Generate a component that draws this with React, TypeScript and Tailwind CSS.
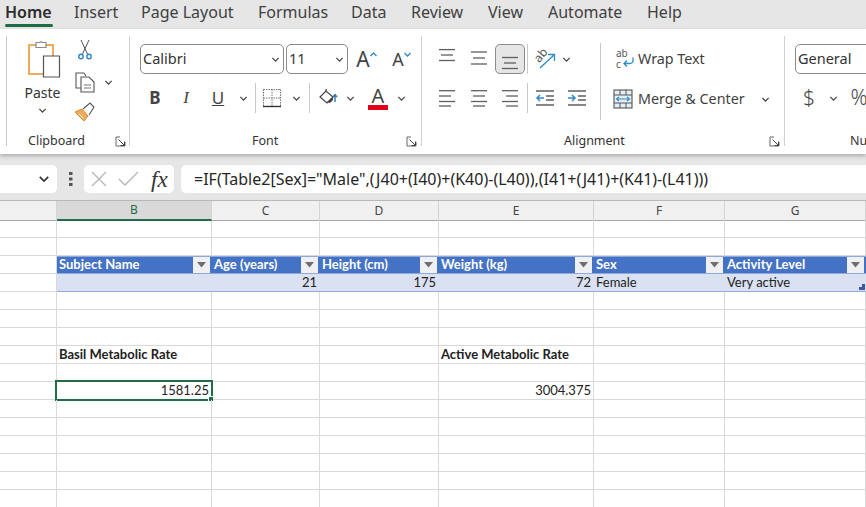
import React from "react";

const G = "#5f5f5f";
const Chev = ({ s = 9, c = "#444" }: { s?: number; c?: string }) => (
  <svg className="shrink-0" width={s} height={s} viewBox="0 0 10 10"><path d="M1.5 3.2 5 6.8 8.5 3.2" fill="none" stroke={c} strokeWidth="1.4" /></svg>
);
const Launcher = () => (
  <svg width="11" height="11" viewBox="0 0 11 11"><path d="M5 1H1v9h9V6" fill="none" stroke="#666" strokeWidth="1" /><path d="M3.5 3.5 9.5 9.5M9.5 5.5v4h-4" fill="none" stroke="#444" strokeWidth="1" /></svg>
);
const Lines = ({ rows }: { rows: [number, number, number][] }) => (
  <svg width="20" height="20" viewBox="0 0 20 20" className="overflow-visible">
    {rows.map(([x1, x2, y], i) => <line key={i} x1={x1} x2={x2} y1={y} y2={y} stroke={G} strokeWidth="1.3" />)}
  </svg>
);
const Sep = ({ h = "h-[30px]" }: { h?: string }) => <div className={`w-px bg-[#c8c8c8] ${h} shrink-0`} />;

const Paste = () => (
  <svg width="36" height="40" viewBox="0 0 36 40">
    <path d="M3 6h24v29H3z" fill="#fff" stroke="#eeab5c" strokeWidth="2" />
    <path d="M10 3.5h3.5a2 2 0 0 1 3 0H20v5H10z" fill="#fff" stroke="#8a8a8a" strokeWidth="1.2" />
    <path d="M17.5 17h16v21h-16z" fill="#fff" stroke="#555" strokeWidth="1.2" />
  </svg>
);
const Scissors = () => (
  <svg width="16" height="22" viewBox="0 0 16 22">
    <path d="M4 1l6.5 14M12 1 5.5 15" fill="none" stroke="#555" strokeWidth="1" />
    <circle cx="4" cy="17.5" r="2.2" fill="none" stroke="#2e86c8" strokeWidth="1.4" />
    <circle cx="12" cy="17.5" r="2.2" fill="none" stroke="#2e86c8" strokeWidth="1.4" />
  </svg>
);
const Copy = () => (
  <svg width="22" height="22" viewBox="0 0 22 22">
    <path d="M7 17H2V2h8l2 3" fill="none" stroke="#555" strokeWidth="1.1" />
    <path d="M7 6h8l5 5v10H7z" fill="#fff" stroke="#555" strokeWidth="1.1" />
    <path d="M10 14h7M10 17h7" stroke="#777" strokeWidth="1" />
  </svg>
);
const Brush = () => (
  <svg width="22" height="20" viewBox="0 0 22 20">
    <path d="M1 10l7-3 6 7-4 5z" fill="#eeab5c" stroke="#d98a2b" strokeWidth="1" />
    <path d="M9 7l7-6 4 4-5 8" fill="#fff" stroke="#555" strokeWidth="1.1" />
    <path d="M5 12l4 4" stroke="#fff" strokeWidth="1" />
  </svg>
);
const Borders = () => (
  <svg width="20" height="20" viewBox="0 0 20 20">
    <path d="M1.5 1.5h17M1.5 10h17M1.5 1.5v17M10 1.5v17M18.5 1.5v17" stroke="#777" strokeWidth="1" strokeDasharray="1.5 1" fill="none" />
    <path d="M1 18.5h18" stroke="#333" strokeWidth="1.4" />
  </svg>
);
const Fill = () => (
  <svg width="20" height="20" viewBox="0 0 20 20">
    <path d="M2 9l6-6 7 6-6 6z" fill="#fff" stroke="#444" strokeWidth="1.2" />
    <path d="M8 3V1" stroke="#444" strokeWidth="1.2" />
    <path d="M9 14l6-5v3l-3 3z" fill="#444" />
    <path d="M17 14V7M15 9l2-2.5L19 9" fill="none" stroke="#2e75b6" strokeWidth="1.4" />
  </svg>
);
const Orient = () => (
  <svg width="24" height="24" viewBox="0 0 24 24" className="overflow-visible">
    <text x="1" y="13" fontSize="12" fill="#555" fontFamily="Noto Sans" transform="rotate(-50 7 9)">ab</text>
    <path d="M7 21 21 8M15 7.5h6.5V14" fill="none" stroke="#2e8bcb" strokeWidth="1.3" />
  </svg>
);
const Indent = ({ dir }: { dir: "l" | "r" }) => (
  <svg width="20" height="20" viewBox="0 0 20 20">
    <path d="M1 3h18M11 8h8M11 12h8M1 17h18" stroke={G} strokeWidth="1.3" />
    {dir === "l"
      ? <path d="M9 10H2M5 7l-3 3 3 3" fill="none" stroke="#2e8bcb" strokeWidth="1.5" />
      : <path d="M1 10h7M5 7l3 3-3 3" fill="none" stroke="#2e8bcb" strokeWidth="1.5" />}
  </svg>
);
const Wrap = () => (
  <svg width="20" height="22" viewBox="0 0 20 22" className="overflow-visible">
    <text x="0" y="9" fontSize="10" fill="#555" fontFamily="Noto Sans">ab</text>
    <text x="0" y="20" fontSize="10" fill="#555" fontFamily="Noto Sans">c</text>
    <path d="M17 9.5v3a3 3 0 0 1-3 3H8M11 12.5l-3 3 3 3" fill="none" stroke="#2e8bcb" strokeWidth="1.3" />
  </svg>
);
const Merge = () => (
  <svg width="20" height="20" viewBox="0 0 20 20">
    <rect x="1" y="1" width="18" height="18" fill="#e3eef7" stroke="#555" strokeWidth="1.1" />
    <path d="M1 6h18M1 14h18M7 1v5M13 1v5M7 14v5M13 14v5" stroke="#555" strokeWidth="1" />
    <path d="M3.5 10h13M6 8l-2.5 2L6 12M14 8l2.5 2-2.5 2" fill="none" stroke="#2e8bcb" strokeWidth="1.1" />
  </svg>
);
const FilterBtn = () => (
  <div className="w-[17px] h-[16px] bg-[#f0f0f2] flex items-center justify-center shrink-0">
    <svg width="9" height="6" viewBox="0 0 9 6"><path d="M0 0h9L4.5 5.5z" fill="#6e6e6e" /></svg>
  </div>
);

const Box = ({ className = "", children }: { className?: string; children?: React.ReactNode }) => (
  <div className={`flex items-center justify-center shrink-0 ${className}`}>{children}</div>
);
const Combo = ({ label, className }: { label: string; className: string }) => (
  <div className={`h-[30px] border border-[#8a8a8a] rounded-[5px] flex items-center pl-[2px] pr-[3px] justify-between shrink-0 text-[14.5px] text-[#333] ${className}`}>
    <span>{label}</span><Chev />
  </div>
);

const tabs = ["Home", "Insert", "Page Layout", "Formulas", "Data", "Review", "View", "Automate", "Help"];
const tabW = ["w-[69px]", "w-[67px]", "w-[117px]", "w-[93px]", "w-[60px]", "w-[77px]", "w-[60px]", "w-[99px]", "w-[60px]"];

const colW = ["w-[57px]", "w-[155px]", "w-[108px]", "w-[119px]", "w-[155px]", "w-[131px]", "w-[141px]"];
const headers = ["Subject Name", "Age (years)", "Height (cm)", "Weight (kg)", "Sex", "Activity Level"];
const rowIdx = Array.from({ length: 16 }, (_, i) => i);

const Plain = ({ c, className = "", children }: { c: number; className?: string; children?: React.ReactNode }) => (
  <div className={`${colW[c]} shrink-0 border-r border-[#d9d9d9] pl-[2px] pr-[2px] flex items-center relative ${className}`}>{children}</div>
);

function Row({ i }: { i: number }) {
  const h = i === 0 ? "h-[17px]" : "h-[18px]";
  if (i === 2) {
    return (
      <div className="flex h-[18px]">
        <div className="w-[57px] shrink-0 border-b border-r border-[#d9d9d9]" />
        {headers.map((t, k) => (
          <div key={t} className={`${colW[k + 1]} shrink-0 bg-[#4472c4] border-y border-[#8ea9db] flex items-center justify-between pl-[2px] pr-[2px] text-white font-bold text-[13px]`}>
            <span className="-mt-[2px]">{t}</span><FilterBtn />
          </div>
        ))}
      </div>
    );
  }
  if (i === 3) {
    const vals = ["", "21", "175", "72"];
    return (
      <div className="flex h-[18px]">
        <div className="w-[57px] shrink-0 border-b border-r border-[#d9d9d9]" />
        {vals.map((v, k) => (
          <div key={k} className={`${colW[k + 1]} shrink-0 bg-[#d9e1f2] border-b border-[#8ea9db] flex items-center justify-end pr-[3px]`}>{v}</div>
        ))}
        <div className={`${colW[5]} shrink-0 bg-[#d9e1f2] border-b border-[#8ea9db] flex items-center pl-[2px]`}>Female</div>
        <div className={`${colW[6]} shrink-0 bg-[#d9e1f2] border-b border-[#8ea9db] flex items-center pl-[2px] relative`}>
          Very active
          <svg className="absolute right-px bottom-px" width="6" height="6" viewBox="0 0 6 6"><path d="M6 0v6H0V3h3V0z" fill="#3f55a5" /></svg>
        </div>
      </div>
    );
  }
  return (
    <div className={`flex ${h} border-b border-[#d9d9d9]`}>
      {colW.map((_, c) => {
        let content: React.ReactNode = null;
        let cls = "";
        if (i === 7 && c === 1) { content = "Basil Metabolic Rate"; cls = "font-bold"; }
        if (i === 7 && c === 4) { content = "Active Metabolic Rate"; cls = "font-bold"; }
        if (i === 9 && c === 1) { content = "1581.25"; cls = "justify-end"; }
        if (i === 9 && c === 4) { content = "3004.375"; cls = "justify-end"; }
        return (
          <Plain key={c} c={c} className={`whitespace-nowrap ${cls}`}>
            {content}
            {i === 9 && c === 1 && (
              <>
                <div className="absolute left-[-2px] top-[-2px] w-[158px] h-[21px] border-2 border-[#1f6e46]" />
                <div className="absolute right-[-2px] bottom-[-2px] w-[5px] h-[5px] bg-[#1f6e46] border-l border-t border-white" />
              </>
            )}
          </Plain>
        );
      })}
    </div>
  );
}

export default function App() {
  return (
    <div className="w-[866px] h-[507px] overflow-hidden bg-white text-[#1f1f1f] font-['Noto_Sans',sans-serif]">
      {/* Tabs */}
      <div className="h-[29px] bg-[#e6e6e6] flex pl-[6px] text-[#3f3f3f] text-[16px]">
        {tabs.map((t, i) => (
          <div key={t} className={`${tabW[i]} shrink-0 h-[29px] leading-[24px] ${i === 0 ? "font-semibold text-[#2b2b2b] -ml-px" : ""}`}>
            {t}
            {i === 0 && <div className="w-[48px] h-[3px] bg-[#1e6b47] rounded-sm" />}
          </div>
        ))}
      </div>

      {/* Ribbon */}
      <div className="h-[125px] bg-white flex items-stretch pl-[6px] pt-[7px] pb-[7px] shadow-[0_2px_4px_rgba(0,0,0,0.25)] relative overflow-hidden text-[#333]">
        <Sep h="h-[110px]" />
        {/* Clipboard */}
        <div className="w-[123px] shrink-0 border-r border-[#d0d0d0] h-[110px] flex flex-col">
          <div className="flex h-[100px]">
            <div className="w-[61px] ml-[5px] flex flex-col items-center pt-[3px]">
              <div className="ml-[2px]"><Paste /></div>
              <div className="text-[14px] leading-[18px] mt-[5px]">Paste</div>
              <div className="mt-[4px]"><Chev /></div>
            </div>
            <div className="flex flex-col items-start pt-[2px] gap-[9px] ml-[1px]">
              <Box className="w-[22px] h-[24px]"><Scissors /></Box>
              <div className="flex items-center gap-[8px] h-[22px]"><Box className="w-[22px]"><Copy /></Box><Chev /></div>
              <Box className="w-[22px] h-[20px]"><Brush /></Box>
            </div>
          </div>
          <div className="flex items-center h-[10px] pl-[21px] pr-[3px] justify-between text-[12.5px]"><span>Clipboard</span><Launcher /></div>
        </div>
        {/* Font */}
        <div className="w-[292px] shrink-0 border-r border-[#d0d0d0] h-[110px] flex flex-col pl-[10px]">
          <div className="flex items-center mt-[8px] gap-[2px]">
            <Combo label="Calibri" className="w-[144px]" />
            <Combo label="11" className="w-[62px]" />
            <Box className="w-[33px] h-[30px] text-[#444]">
              <span className="text-[21px] leading-none">A</span>
              <svg width="7" height="5" viewBox="0 0 7 5" className="mb-[10px]"><path d="M.5 4 3.5 1l3 3" fill="none" stroke="#2e8bcb" strokeWidth="1.3" /></svg>
            </Box>
            <Box className="w-[33px] h-[30px] text-[#444]">
              <span className="text-[18px] leading-none">A</span>
              <svg width="7" height="5" viewBox="0 0 7 5" className="mb-[10px]"><path d="M.5 1l3 3 3-3" fill="none" stroke="#2e8bcb" strokeWidth="1.3" /></svg>
            </Box>
          </div>
          <div className="flex items-center mt-[9px] h-[30px] text-[#444]">
            <Box className="w-[30px] font-bold text-[17px]">B</Box>
            <Box className="w-[32px] italic text-[17px] font-['Liberation_Serif',serif]">I</Box>
            <Box className="w-[32px] text-[17px] underline">U</Box>
            <Box className="w-[18px]"><Chev /></Box>
            <Box className="w-[3px]" />
            <Sep />
            <Box className="w-[32px]"><Borders /></Box>
            <Box className="w-[16px]"><Chev /></Box>
            <Box className="w-[5px]" />
            <Sep />
            <Box className="w-[36px]"><Fill /></Box>
            <Box className="w-[8px]"><Chev /></Box>
            <Box className="w-[4px]" />
            <Box className="w-[40px]">
              <div className="flex flex-col items-center">
                <span className="text-[20px] leading-[18px]">A</span>
                <div className="w-[20px] h-[5px] bg-[#e3001b]" />
              </div>
            </Box>
            <Box className="w-[6px]"><Chev /></Box>
          </div>
          <div className="flex items-center h-[10px] mt-[23px] pr-[4px] text-[12.5px]">
            <span className="ml-[112px]">Font</span><span className="ml-auto"><Launcher /></span>
          </div>
        </div>
        {/* Alignment */}
        <div className="w-[363px] shrink-0 border-r border-[#d0d0d0] h-[110px] flex flex-col">
          <div className="flex h-[100px] pl-[9px]">
            <div className="flex flex-col">
              <div className="flex items-center mt-[8px] h-[30px]">
                <Box className="w-[32px]"><Lines rows={[[2, 18, 0.6], [4, 16, 6], [2, 18, 11.5]]} /></Box>
                <Box className="w-[32px]"><Lines rows={[[2, 18, 3], [4, 16, 9], [2, 18, 15]]} /></Box>
                <Box className="w-[30px] h-[30px] bg-[#e6e6e6] border border-[#8a8a8a] rounded-[5px]"><Lines rows={[[2, 18, 8.5], [4, 16, 14], [2, 18, 19.5]]} /></Box>
                <Box className="w-[2px]" />
                <Sep />
                <Box className="w-[34px]"><Orient /></Box>
                <Box className="w-[8px]"><Chev /></Box>
              </div>
              <div className="flex items-center mt-[9px] h-[30px]">
                <Box className="w-[32px]"><Lines rows={[[2, 18, 2.7], [2, 14, 8], [2, 18, 13.5], [2, 14, 18]]} /></Box>
                <Box className="w-[32px]"><Lines rows={[[2, 18, 2.7], [4, 16, 8], [2, 18, 13.5], [4, 16, 18]]} /></Box>
                <Box className="w-[30px]"><Lines rows={[[2, 18, 2.7], [6, 18, 8], [2, 18, 13.5], [6, 18, 18]]} /></Box>
                <Box className="w-[2px]" />
                <Sep />
                <Box className="w-[34px]"><Indent dir="l" /></Box>
                <Box className="w-[30px]"><Indent dir="r" /></Box>
              </div>
            </div>
            <div className="ml-[8px] w-px h-[77px] mt-[7px] bg-[#c8c8c8]" />
            <div className="flex flex-col pl-[12px] text-[14.3px] text-[#3f3f3f]">
              <div className="flex items-center gap-[2px] ml-[3px] mt-[8px] h-[30px]"><Wrap /><span>Wrap Text</span></div>
              <div className="flex items-center gap-[5px] mt-[10px] h-[30px]"><Merge /><span>Merge &amp; Center</span><span className="ml-[11px] flex"><Chev /></span></div>
            </div>
          </div>
          <div className="flex items-center h-[10px] pl-[142px] pr-[4px] text-[12.5px]"><span>Alignment</span><span className="ml-auto"><Launcher /></span></div>
        </div>
        {/* Number */}
        <div className="flex-1 h-[110px] flex flex-col pl-[10px] min-w-0">
          <Combo label="General" className="w-[120px] mt-[8px]" />
          <div className="flex items-center mt-[9px] h-[30px] text-[#444]">
            <Box className="w-[28px] text-[21px] font-light">$</Box>
            <Box className="w-[20px]"><Chev /></Box>
            <Box className="w-[32px] text-[21px] font-light">%</Box>
          </div>
          <div className="flex items-center h-[10px] mt-[23px] pl-[55px] text-[12.5px] whitespace-nowrap"><span>Number</span></div>
        </div>
      </div>

      {/* Formula bar */}
      <div className="h-[47px] bg-[#e6e6e6] border-b border-[#b8b8b8] flex items-start pt-[11px]">
        <div className="w-[57px] h-[28px] bg-white rounded-r-[5px] flex items-center justify-end pr-[7px]"><Chev s={12} c="#333" /></div>
        <div className="w-[27px] h-[28px] flex items-center justify-center">
          <svg width="4" height="14" viewBox="0 0 4 14"><path d="M0 0h3.5v3H0zM0 5.5h3.5v3H0zM0 11h3.5v3H0z" fill="#555" /></svg>
        </div>
        <div className="w-[90px] h-[28px] bg-white rounded-[5px] flex items-center pl-[7px]">
          <svg width="16" height="16" viewBox="0 0 16 16"><path d="M1 1l14 14M15 1 1 15" stroke="#b5b5b5" strokeWidth="1.3" /></svg>
          <svg className="ml-[11px]" width="21" height="16" viewBox="0 0 21 16"><path d="M1 8l6 6L20 1" fill="none" stroke="#b5b5b5" strokeWidth="1.3" /></svg>
          <span className="ml-[12px] font-['Liberation_Serif',serif] italic text-[23px] leading-none text-[#333]">fx</span>
        </div>
        <div className="ml-[7px] flex-1 h-[28px] bg-white rounded-l-[5px] pl-[13px] flex items-center text-[16px] text-[#262626] whitespace-nowrap overflow-hidden">
          =IF(Table2[Sex]="Male",(J40+(I40)+(K40)-(L40)),(I41+(J41)+(K41)-(L41)))
        </div>
      </div>

      {/* Column headers */}
      <div className="flex h-[20px] bg-[#f0f0f0] border-b border-[#a8a8a8] text-[12px] text-[#444]">
        {["", "B", "C", "D", "E", "F", "G"].map((l, i) => (
          <div key={i} className={`${colW[i]} shrink-0 h-[20px] flex items-center justify-center border-r border-[#d4d4d4] ${l === "B" ? "bg-[#d9d9d9] border-b-2 border-b-[#1f6e46] text-[#1f6e46]" : ""}`}>{l}</div>
        ))}
      </div>

      {/* Sheet */}
      <div className="font-['Lato',sans-serif] text-[13px] leading-none text-[#222]">
        {rowIdx.map((i) => <Row key={i} i={i} />)}
      </div>
    </div>
  );
}
